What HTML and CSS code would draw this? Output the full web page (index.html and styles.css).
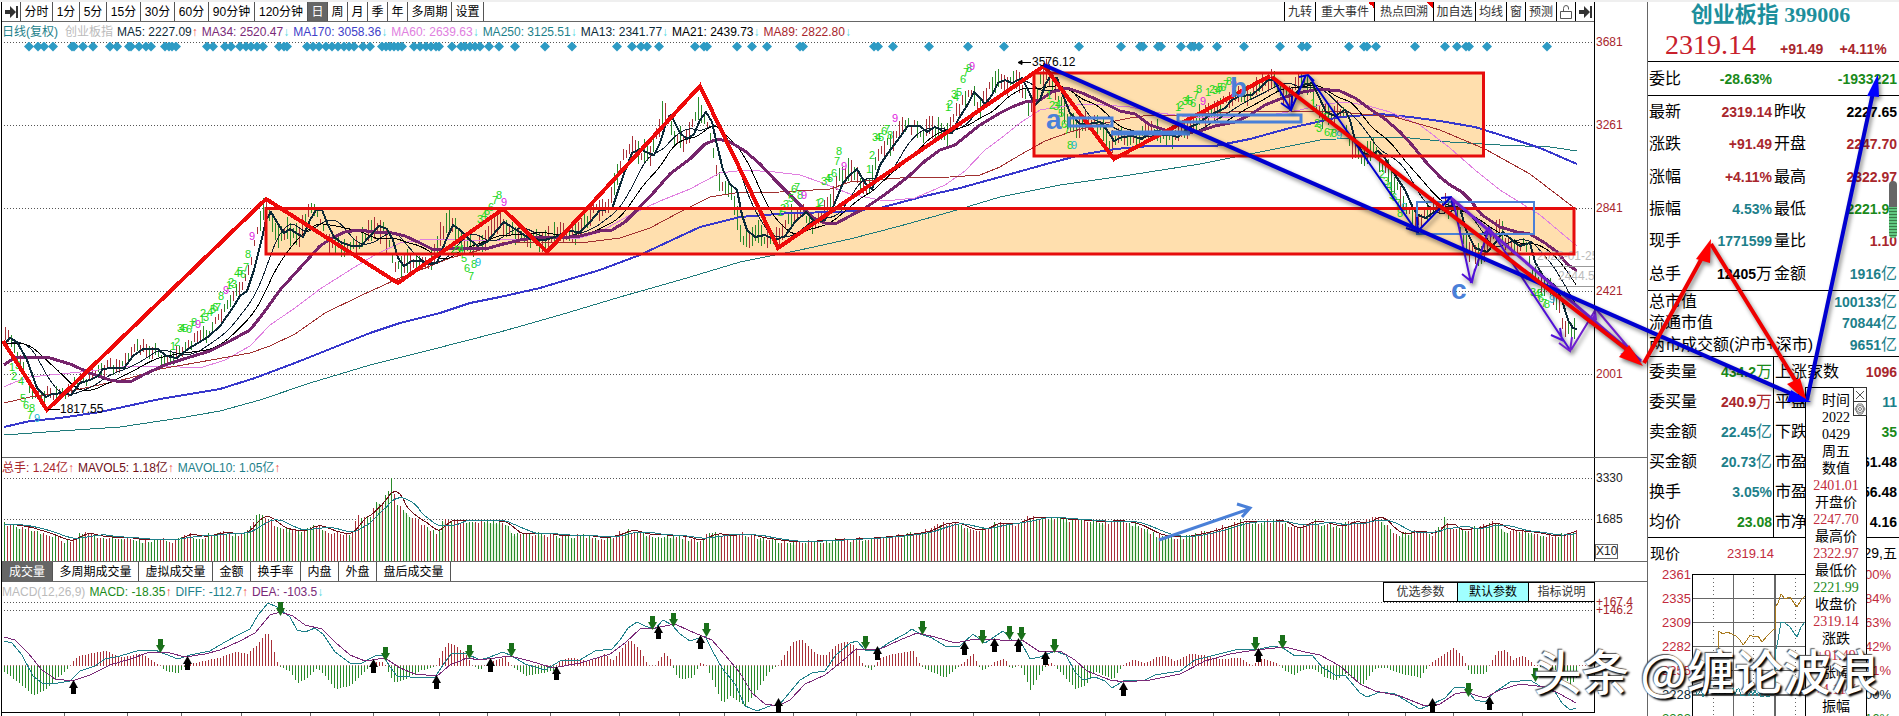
FILE: index.html
```
<!DOCTYPE html>
<html lang="zh-CN">
  <head>
    <meta charset="utf-8">
    <title>创业板指 399006</title>
    <link rel="stylesheet" href="styles.css">
  </head>
  <body>
    <div class="app">
      <main class="charts">
        <section class="panel price">
          <div class="plot">
            <nav class="toolbar">
              <div class="periods">
                <button class="icon" aria-label="收起"><svg width="13" height="12" viewBox="0 0 13 12"><path d="M0 4h5V0l6 6-6 6V8H0zM11 0h2v12h-2z" fill="#333"/></svg></button>
                <button>分时</button><button>1分</button><button>5分</button><button>15分</button><button>30分</button><button>60分</button><button>90分钟</button><button>120分钟</button><button class="active">日</button><button>周</button><button>月</button><button>季</button><button>年</button><button>多周期</button><button>设置</button>
              </div>
              <div class="tools">
                <button>九转</button><button class="flag">重大事件</button><button class="flag">热点回溯</button><button>加自选</button><button>均线</button><button>窗</button><button>预测</button>
                <button class="icon" aria-label="锁定"><svg width="12" height="14" viewBox="0 0 12 14" fill="none" stroke="#555"><path d="M.5 6.500h11v7H.5zM3.500 6V3.500Q3.500 .5 6 .5T8.500 3v1.500"/></svg></button>
                <button class="icon" aria-label="展开"><svg width="13" height="12" viewBox="0 0 13 12"><path d="M0 4h5V0l6 6-6 6V8H0zM11 0h2v12h-2z" fill="#333"/></svg></button>
              </div>
            </nav>
            <div class="legend">
              <span class="teal">日线(复权)</span><span class="mute wide">创业板指</span>
              <span class="ink">MA5: 2227.09<i class="up">↑</i></span><span class="purple">MA34: 2520.47<i class="down">↓</i></span><span class="blue">MA170: 3058.36<i class="down">↓</i></span><span class="pink">MA60: 2639.63<i class="down">↓</i></span><span class="teal">MA250: 3125.51<i class="down">↓</i></span><span class="ink">MA13: 2341.77<i class="down">↓</i></span><span>MA21: 2439.73<i class="down">↓</i></span><span class="red">MA89: 2822.80<i class="down">↓</i></span>
            </div>
            <svg id="price" class="price-svg" viewBox="2 42 1592 415" preserveAspectRatio="none"></svg>
          </div>
          <div class="axis price-axis"><span>3681</span><span>3261</span><span>2841</span><span>2421</span><span>2001</span></div>
        </section>

        <section class="panel volume">
          <div class="plot">
            <div class="legend">
              <span class="red">总手: 1.24亿<i class="up">↑</i></span><span class="maroon">MAVOL5: 1.18亿<i class="up">↑</i></span><span class="teal">MAVOL10: 1.05亿<i class="up">↑</i></span>
            </div>
            <svg id="volume" class="volume-svg" viewBox="2 478 1592 83" preserveAspectRatio="none"></svg>
          </div>
          <div class="axis volume-axis"><span>3330</span><span>1685</span><span class="unit">X10</span></div>
        </section>

        <nav class="subtabs">
          <button class="active">成交量</button><button>多周期成交量</button><button>虚拟成交量</button><button>金额</button><button>换手率</button><button>内盘</button><button>外盘</button><button>盘后成交量</button>
        </nav>

        <section class="panel macd">
          <div class="plot">
            <div class="legend">
              <span class="mute">MACD(12,26,9)</span><span class="green">MACD: -18.35<i class="up">↑</i></span><span class="teal">DIFF: -112.7<i class="up">↑</i></span><span class="purple">DEA: -103.5<i class="down">↓</i></span>
              <div class="params"><button>优选参数</button><button class="on">默认参数</button><button>指标说明</button></div>
            </div>
            <svg id="macd" class="macd-svg" viewBox="2 602 1592 110" preserveAspectRatio="none"></svg>
          </div>
          <div class="axis macd-axis"><span>+167.4</span><span>+146.2</span></div>
        </section>
        <svg id="ticks" class="ticks" viewBox="2 713 1645 3" preserveAspectRatio="none"></svg>
      </main>

      <aside class="quote">
        <h1>创业板指 399006</h1>
        <div class="last"><strong>2319.14</strong><b>+91.49</b><b>+4.11%</b></div>
        <table class="ratio">
          <tr><th>委比</th><td class="green">-28.63%</td><th></th><td class="green">-1933221</td></tr>
        </table>
        <table class="detail">
          <tr><th>最新</th><td class="red">2319.14</td><th>昨收</th><td>2227.65</td></tr>
          <tr><th>涨跌</th><td class="red">+91.49</td><th>开盘</th><td class="red">2247.70</td></tr>
          <tr><th>涨幅</th><td class="red">+4.11%</td><th>最高</th><td class="red">2322.97</td></tr>
          <tr><th>振幅</th><td class="teal">4.53%</td><th>最低</th><td class="green">2221.99</td></tr>
          <tr><th>现手</th><td class="teal">1771599</td><th>量比</th><td class="red">1.10</td></tr>
          <tr><th>总手</th><td>12405<i>万</i></td><th>金额</th><td class="teal">1916<i>亿</i></td></tr>
        </table>
        <table class="totals">
          <tr><th>总市值</th><td class="teal">100133<i>亿</i></td></tr>
          <tr><th>流通市值</th><td class="teal">70844<i>亿</i></td></tr>
          <tr><th>两市成交额(沪市+深市)</th><td class="teal">9651<i>亿</i></td></tr>
        </table>
        <table class="market">
          <tr><th>委卖量</th><td class="green">434.2<i>万</i></td><th>上涨家数</th><td class="red">1096</td></tr>
          <tr><th>委买量</th><td class="red">240.9<i>万</i></td><th>平盘家数</th><td class="teal">11</td></tr>
          <tr><th>卖金额</th><td class="teal">22.45<i>亿</i></td><th>下跌家数</th><td class="green">35</td></tr>
          <tr><th>买金额</th><td class="teal">20.73<i>亿</i></td><th>市盈率</th><td>61.48</td></tr>
          <tr><th>换手</th><td class="teal">3.05%</td><th>市盈率</th><td>56.48</td></tr>
          <tr><th>均价</th><td class="green">23.08</td><th>市净率</th><td>4.16</td></tr>
        </table>
        <div class="now"><span>现价</span><span class="crimson">2319.14</span><span class="date">04/29,五</span></div>
        <div class="mini">
          <div class="mini-axis crimson"><span>2361</span><span>2335</span><span>2309</span><span>2282</span><span>2255</span><span class="ink">2228</span><span class="green">2202</span></div>
          <svg id="mini" class="mini-svg" viewBox="1691 574 160 142" preserveAspectRatio="none"></svg>
          <div class="mini-axis crimson"><span>6.00%</span><span>4.84%</span><span>3.63%</span><span>2.42%</span><span>1.21%</span><span class="ink">0.00%</span><span class="green">1.16%</span></div>
        </div>
      </aside>

      <div class="popup">
        <div class="popup-tools">
          <button aria-label="关闭"><svg width="10" height="10" viewBox="0 0 10 10" stroke="#555"><path d="M1 1l8 8M9 1l-8 8"/></svg></button>
          <button aria-label="设置"><svg width="12" height="12" viewBox="0 0 12 12" fill="none" stroke="#777"><path d="M4 1h4l3 5-3 5H4L1 6z"/><circle cx="6" cy="6" r="3.500"/><circle cx="6" cy="6" r="1.500"/></svg></button>
        </div>
        <p>时间</p><p>2022</p><p>0429</p><p>周五</p>
        <p>数值</p><p class="crimson">2401.01</p>
        <p>开盘价</p><p class="crimson">2247.70</p>
        <p>最高价</p><p class="crimson">2322.97</p>
        <p>最低价</p><p class="green">2221.99</p>
        <p>收盘价</p><p class="crimson">2319.14</p>
        <p>涨跌</p><p class="crimson">+91.49</p>
        <p>涨幅</p><p class="crimson">+4.11%</p>
        <p>振幅</p>
      </div>

      <div class="scroll"></div>

      <!-- hand drawn wave count on top of everything -->
      <svg class="notes" viewBox="0 0 1899 716" preserveAspectRatio="none">
        <g fill="none" stroke="#4a80d8">
          <path d="M1417 202h117v32h-117z" stroke-width="2"/>
          <path d="M1069 118h43v8h-43zM1178 115h123v7h-123z" stroke-width="3"/>
          <path d="M1111 133h79" stroke-width="5"/>
          <path d="M1159 540l90-31M1237 504l13 4-8 9" stroke-width="3"/>
        </g>
        <g class="letter">
          <text x="1046" y="129">a</text><text x="1230" y="97">b</text><text x="1451" y="299">c</text>
        </g>
        <g class="shade" fill="none" stroke-width="2">
          <g stroke="#0000d0">
            <path d="M1272 77l19 33M1281 103l10 7 1-14M1291 110l15-35M1299 77l9-2 6 6M1308 75l109 157M1406 228l12 4-1-15M1417 232l34-35M1441 198l10-1 2 9"/>
          </g>
          <g stroke="#5010d8">
            <path d="M1453 200l18 83M1462 274l10 8 3-13M1471 282l18-53M1484 234l5-6 2 9M1490 229l80 121M1551 335l11 5-2-12"/>
          </g>
          <g stroke="#7020d0" stroke-width="3">
            <path d="M1451 198l190 163"/>
            <path d="M1559 343l11 8 2-14M1571 350l25-41 43 51" stroke-width="2"/>
          </g>
          <path d="M1596 310l-7 14 8-4zM1642 362l-21-24 4 14-5 2z" fill="#7020d0"/>
        </g>
        <g class="shade" stroke-width="4">
          <path d="M1044 65l757 333" stroke="#0000d0"/>
          <path d="M1272 77l362 278" stroke="#e00"/>
          <path d="M1644 363l64-116M1711 244l89 144" stroke="#e00" fill="none"/>
          <path d="M1807 400l67-312" stroke="#0000d0"/>
          <path d="M1643 366l-24-9 10-12z" fill="#f00"/>
          <path d="M1711 239l-15 20 14 4zM1807 402l-20-18 13-6z" fill="#f00"/>
          <path d="M1878 74l-11 22 12 1zM1811 402l-24 0 4-12z" fill="#00f"/>
        </g>
      </svg>
      <div class="watermark">头条 @缠论波浪</div>
    </div>
    <script src="chart.js"></script>
  </body>
</html>
```

FILE: styles.css
```
* {
  box-sizing: border-box;
}

body {
  margin: 0;
  border-top: 2px solid #efefef;
  background: #fff;
  color: #000;
  font-family: "Liberation Sans", "Noto Sans CJK SC", sans-serif;
  font-size: 12px;
}

.app {
  position: relative;
  display: flex;
  overflow: hidden;
}

button {
  margin: 0;
  padding: 0;
  border: 0;
  background: none;
  color: inherit;
  font: inherit;
  line-height: 16px;
  white-space: nowrap;
}

svg {
  display: block;
}

i {
  font-style: normal;
  font-weight: normal;
}

/* colours */
.red { color: #a8262c; }
.crimson { color: #c22b3c; }
.maroon { color: #701018; }
.green { color: #1a8a1a; }
.teal { color: #1d7f8a; }
.blue { color: #4040c8; }
.purple { color: #7a2a78; }
.pink { color: #e080e0; }
.mute { color: #bbb; }
.ink { color: #0c2a38; }
.up { color: #f05040; }
.down { color: #50d8e0; }

/* chart column */
.charts {
  flex: 1;
  min-width: 0;
  margin-left: 1px;
  border-left: 1px solid #000;
}

.panel {
  display: grid;
  grid-template-columns: 1fr 53px;
  border-bottom: 1px solid #666;
}

.plot {
  min-width: 0;
}

.plot > svg {
  width: 100%;
}

.price-svg { height: 415px; }
.volume-svg { height: 83px; }
.macd-svg { height: 110px; }

.toolbar {
  display: flex;
  justify-content: space-between;
  height: 20px;
  border-bottom: 1px solid #666;
}

.periods {
  display: grid;
  grid-template-columns: 19px 32px repeat(2, 27px) repeat(3, 34px) 46px 53px repeat(5, 20px) 44px 32px;
}

.periods button {
  border-right: 1px solid #555;
}

.tools {
  display: grid;
  grid-template-columns: 31px 59px 59px 42px 31px 19px 31px 19px 19px;
  color: #333;
}

.tools button {
  border-left: 1px solid #000;
}

.icon {
  display: flex;
  align-items: center;
  justify-content: center;
}

.toolbar .active,
.subtabs .active {
  background: #666;
  color: #fff;
}

.flag {
  background: linear-gradient(45deg, transparent 50%, #e00 50%) top right / 6px 6px no-repeat;
}

.legend {
  display: flex;
  gap: 4px;
  height: 20px;
  line-height: 20px;
  white-space: nowrap;
}

.legend i {
  display: inline-block;
  width: 6px;
  overflow: hidden;
  font-family: "Liberation Sans", sans-serif;
  vertical-align: top;
}

.wide {
  margin-left: 3px;
}

.axis {
  display: flex;
  flex-direction: column;
  padding-left: 1px;
  border-left: 1px solid #000;
  color: #a8262c;
  line-height: 16px;
}

.price-axis {
  gap: 67px;
  padding-top: 32px;
}

.volume-axis {
  gap: 25px;
  padding-top: 12px;
  color: #222;
}

.unit {
  width: 23px;
  margin-top: -8px;
  margin-left: -1px;
  border: 1px solid #666;
  line-height: 13px;
}

.macd-axis {
  padding-top: 16px;
  line-height: 8px;
}

.subtabs {
  display: grid;
  grid-template-columns: 51px 86px 74px 38px 50px 38px 38px 74px;
  height: 20px;
  border-bottom: 1px solid #666;
}

.subtabs button {
  border-right: 1px solid #555;
}

.macd {
  border-bottom: 0;
}

.macd .plot {
  border-bottom: 1px solid #000;
}

.params {
  display: grid;
  grid-template-columns: 73px 72px 65px;
  margin-left: auto;
  border: solid #000;
  border-width: 1px 0 1px 1px;
  color: #333;
}

.params .on {
  border: solid #000;
  border-width: 0 1px;
  background: #a0ffff;
  color: #000;
}

.ticks {
  width: 100%;
  height: 3px;
}

/* quote column */
.quote {
  width: 252px;
  border-left: 1px solid #666;
}

h1 {
  margin: 0;
  height: 26px;
  padding-right: 6px;
  color: #1d8f9c;
  font-family: "Liberation Serif", "Noto Sans CJK SC", serif;
  font-size: 22px;
  line-height: 26px;
  text-align: center;
  white-space: nowrap;
}

.last {
  display: flex;
  align-items: baseline;
  height: 33px;
  padding-left: 17px;
  color: #a8262c;
  line-height: 33px;
}

.last strong {
  width: 118px;
  color: #c8202c;
  font-family: "Liberation Serif", serif;
  font-size: 28px;
  font-weight: normal;
}

.last b {
  width: 61px;
  font-size: 14px;
}

table {
  width: 100%;
  table-layout: fixed;
  border-collapse: separate;
  border-spacing: 0;
  border-top: 1px solid #000;
}

th,
td {
  padding: 0 1px;
  line-height: 18px;
  white-space: nowrap;
}

th {
  width: 50px;
  font-size: 16px;
  font-weight: normal;
  text-align: left;
}

td {
  width: 75px;
  font-size: 14px;
  font-weight: bold;
  text-align: right;
}

td + th {
  width: 50px;
}

td:last-child {
  width: auto;
  padding-right: 2px;
}

td i {
  font-size: 16px;
}

.ratio { height: 34px; }
.detail { height: 195px; }
.totals { height: 66px; }
.market {
  height: 181px;
}

.totals th {
  width: 170px;
}

.market td + th {
  border-left: 1px solid #000;
}

.now {
  display: grid;
  grid-template-columns: 60px 64px 1fr;
  height: 37px;
  padding: 0 2px;
  border-top: 1px solid #000;
  font-size: 13px;
  line-height: 31px;
  text-align: right;
}

.now span:first-child {
  font-size: 15px;
  text-align: left;
}

.date {
  font-size: 14px;
}

.mini {
  display: grid;
  grid-template-columns: 43px 160px 40px;
  height: 142px;
}

.mini-axis {
  display: flex;
  flex-direction: column;
  height: 153px;
  margin-top: -11px;
  overflow: hidden;
  font-size: 13px;
  line-height: 24px;
  text-align: right;
}

.mini-svg {
  width: 100%;
  height: 142px;
}

/* floating data window */
.popup {
  position: absolute;
  top: 385px;
  right: 32px;
  width: 62px;
  height: 340px;
  padding-top: 4px;
  border: 1px solid #000;
  background: #fff;
  font-family: "Liberation Serif", "Noto Sans CJK SC", serif;
  font-size: 14px;
  line-height: 17px;
  text-align: center;
}

.popup p {
  margin: 0;
}

.popup-tools {
  position: absolute;
  top: -1px;
  right: -1px;
}

.popup-tools button {
  display: flex;
  align-items: center;
  justify-content: center;
  width: 14px;
  height: 15px;
  margin-bottom: -1px;
  border: 1px solid #333;
}

.scroll {
  position: absolute;
  top: 179px;
  right: 2px;
  width: 8px;
  height: 57px;
  border-radius: 4px;
  background: linear-gradient(#666 26px, transparent 26px), repeating-linear-gradient(#3a7a48 0 1px, #60c880 1px 3px);
}

.notes {
  position: absolute;
  top: -2px;
  left: 0;
  width: 100%;
  height: 716px;
  pointer-events: none;
}

.shade {
  filter: drop-shadow(2px 3px 2px rgba(0, 0, 0, 0.45));
}

.shade path[fill^="#"] {
  stroke: none;
}

.letter {
  fill: #4a80d8;
  font-size: 28px;
  font-weight: bold;
}

.watermark {
  position: absolute;
  top: 632px;
  right: 20px;
  color: #fff;
  font-family: "Noto Sans CJK SC", sans-serif;
  font-size: 48px;
  font-weight: 500;
  line-height: 70px;
  text-shadow: 2px 2px 2px #000, -1px -1px 1px #555;
  white-space: nowrap;
}

/* svg pieces */
.crisp {
  shape-rendering: crispEdges;
}

.count {
  font-size: 11px;
  text-anchor: middle;
}

.tag {
  font-size: 12px;
}
```

FILE: chart.js
```
const RED = "#a83038";
const GREEN = "#2a8a2a";

// every list below is "x,y x,y ..." in screen units
const ma5 = "4,344 10,338 17,342 27,360 37,388 46,397 52,394 64,393 71,395 80,383 90,380 98,376 103,369 112,368 124,368 133,356 143,349 158,349 166,356 177,358 188,349 198,343 208,337 220,326 232,309 240,296 247,291 254,270 262,238 266,220 271,212 278,224 284,233 290,229 296,233 303,237 310,220 316,210 322,210 328,225 334,237 342,243 352,246 361,246 370,236 379,226 387,229 393,240 398,258 404,266 412,261 420,261 430,264 437,263 446,240 453,225 460,230 470,240 478,246 487,242 497,230 504,222 510,226 520,232 530,239 545,240 555,237 567,231 580,232 590,222 600,210 612,209 620,185 626,168 632,153 640,149 648,153 654,155 660,143 667,120 671,115 680,133 687,139 694,134 700,120 706,112 712,122 717,145 723,170 730,184 737,190 742,215 747,230 755,237 765,235 775,240 785,236 795,222 806,212 815,222 825,220 834,205 843,183 850,175 857,169 862,178 868,187 872,189 880,165 888,153 894,145 900,137 908,126 920,126 927,132 935,127 945,132 952,133 958,120 968,104 974,92 980,98 985,104 992,95 998,83 1005,80 1012,83 1022,78 1028,90 1035,105 1040,100 1045,85 1050,77 1057,78 1063,95 1070,113 1080,124 1088,124 1100,122 1107,130 1114,141 1122,137 1132,136 1142,139 1150,132 1158,131 1166,134 1178,137 1188,128 1197,124 1210,115 1225,108 1232,100 1240,96 1252,95 1260,88 1268,80 1277,80 1284,85 1294,95 1303,85 1312,83 1319,97 1326,112 1335,116 1345,110 1350,120 1355,140 1362,152 1370,156 1378,151 1385,158 1395,175 1405,190 1413,208 1418,215 1426,218 1437,210 1450,206 1460,208 1466,230 1475,248 1487,252 1495,243 1503,232 1514,242 1520,246 1530,243 1535,262 1543,276 1555,286 1562,300 1568,320 1573,328 1577,329";
const ma34 = "4,365 14,358 22,357 50,358 70,364 90,373 110,380 122,382 132,381 145,374 165,365 190,357 210,351 230,341 250,330 262,315 280,290 300,268 320,246 332,238 345,232 358,230 375,232 392,233 405,236 420,243 432,249 440,250 455,248 485,249 500,245 520,240 540,237 560,238 580,236 600,231 612,230 625,222 640,207 655,191 670,174 690,159 705,144 718,139 730,142 745,151 760,164 775,180 790,195 805,210 815,219 825,223 837,223 850,216 865,208 880,198 895,187 910,175 925,161 940,150 955,145 965,137 980,125 1000,113 1012,107 1025,102 1040,100 1052,92 1067,88 1082,93 1100,101 1120,111 1135,114 1150,125 1165,130 1180,134 1200,131 1215,126 1235,122 1250,115 1265,105 1285,97 1303,92 1320,89 1340,91 1355,98 1370,109 1385,119 1400,132 1412,145 1425,161 1440,177 1450,185 1462,192 1470,200 1482,215 1500,227 1517,232 1530,234 1545,243 1557,252 1567,264 1577,271";
const ma60 = "4,387 15,382 30,377 60,374 90,371 130,366 160,366 200,368 225,360 250,346 270,325 295,308 320,289 350,270 375,255 400,243 420,240 440,239 470,241 500,240 540,238 580,238 600,232 630,215 660,201 690,189 720,173 745,170 775,172 800,175 820,182 850,194 885,201 915,198 945,185 965,171 985,150 1000,139 1020,123 1040,110 1065,106 1090,104 1130,107 1160,113 1190,117 1230,117 1270,115 1300,110 1325,104 1345,102 1365,105 1390,112 1420,125 1450,148 1475,170 1500,190 1540,215 1577,246";
const ma89 = "4,403 30,397 60,393 90,387 130,378 160,369 200,362 250,353 270,346 295,334 325,313 360,296 395,280 420,270 450,258 480,250 505,242 540,242 580,243 620,238 650,228 680,212 710,197 735,193 780,192 830,189 850,182 900,178 950,177 980,175 1000,167 1020,155 1045,141 1070,132 1100,124 1130,118 1150,115 1180,115 1230,112 1290,111 1340,112 1395,117 1440,130 1485,149 1530,174 1577,210";
const ma170 = "4,427 30,421 60,418 100,412 160,399 220,389 255,378 300,361 340,345 370,333 400,323 440,313 470,303 500,297 540,288 600,270 640,255 672,240 700,227 740,217 790,213 840,212 880,208 925,196 960,188 1000,177 1050,163 1085,154 1115,149 1150,146 1215,146 1250,139 1290,128 1340,117 1380,114 1410,117 1440,121 1475,127 1510,138 1540,148 1577,164";
const ma250 = "4,435 60,431 120,427 180,418 220,411 260,400 310,383 370,365 430,350 500,332 560,315 620,297 680,280 740,262 800,250 850,239 900,226 950,212 1000,197 1060,185 1130,175 1200,164 1260,152 1320,140 1370,137 1410,138 1450,142 1500,145 1550,147 1577,151";
const zigzag = "3,341 47,410 266,199 398,283 503,209 547,252 700,86 778,248 1044,66 1114,159 1270,76";
const volume = "4,524 25,527 50,535 64,541 72,540 80,532 100,537 120,537 140,540 165,539 175,541 182,533 200,537 220,532 240,535 250,525 258,514 268,518 278,528 290,530 300,532 312,524 325,529 335,533 350,534 358,516 370,515 375,500 383,502 388,488 391,478 394,495 398,505 404,510 412,518 425,524 430,532 438,532 443,516 450,522 460,520 480,520 505,522 511,533 520,534 540,533 560,536 580,535 600,538 615,535 628,529 640,534 680,536 697,541 710,533 730,536 740,533 760,538 790,542 830,540 870,538 910,534 930,530 937,524 955,522 965,529 980,530 995,522 1012,525 1023,518 1050,517 1060,519 1080,520 1100,522 1115,520 1135,524 1150,532 1160,536 1180,537 1205,532 1225,526 1240,521 1260,522 1280,520 1293,530 1310,520 1340,527 1350,520 1360,524 1378,515 1390,530 1400,535 1415,530 1430,535 1438,527 1442,525 1445,512 1448,528 1460,530 1480,527 1490,521 1505,530 1530,532 1555,537 1570,531 1576,530";
const diff = "4,641 12,643 22,655 33,676 42,683 52,684 70,681 80,671 95,666 105,659 120,656 140,650 155,650 165,654 178,659 190,655 210,651 225,642 240,634 250,629 258,615 268,603 277,607 290,617 297,630 305,632 315,628 323,634 335,652 350,663 360,664 375,656 383,655 390,667 397,676 410,677 435,677 443,665 452,653 467,654 480,660 490,657 503,652 512,656 525,664 538,668 545,670 560,661 580,660 595,651 612,649 620,640 628,628 637,622 645,626 655,629 663,620 672,625 680,634 690,641 705,636 712,650 722,668 735,684 745,706 757,711 770,706 780,704 790,692 800,680 812,673 825,671 835,656 850,643 857,641 865,650 878,650 890,642 905,634 912,629 920,634 932,638 945,646 960,646 973,634 985,643 1003,631 1012,640 1020,640 1030,659 1040,657 1055,651 1066,655 1075,672 1083,680 1095,677 1105,681 1112,688 1125,680 1145,680 1155,675 1180,671 1195,660 1215,655 1235,650 1260,649 1273,646 1283,648 1295,656 1312,655 1322,667 1335,675 1345,675 1360,693 1367,697 1380,692 1395,694 1408,702 1420,709 1430,705 1445,698 1455,687 1465,688 1475,700 1485,702 1495,692 1510,682 1530,680 1545,689 1555,692 1562,703 1570,710 1576,708";
const dea = "4,637 15,640 28,653 42,670 55,679 72,681 90,675 110,665 130,659 150,652 170,653 185,657 205,654 220,650 240,641 255,633 270,615 280,612 293,616 305,625 322,629 335,642 350,655 365,661 385,658 400,668 415,674 437,676 450,665 467,658 480,660 510,656 530,661 553,668 580,663 610,654 625,643 640,629 655,628 675,624 690,631 702,636 712,640 725,655 740,673 752,693 765,704 778,706 790,700 805,684 825,675 840,663 855,650 880,649 900,640 917,633 935,637 955,643 975,639 1000,640 1022,640 1040,652 1060,651 1075,660 1087,671 1110,680 1125,682 1150,680 1180,674 1205,661 1230,654 1255,650 1285,647 1305,652 1320,655 1340,666 1360,684 1375,691 1400,696 1425,706 1440,704 1455,694 1465,692 1485,698 1500,690 1520,684 1545,687 1560,694 1576,703";
const hist = "4,-6 22,-20 33,-30 45,-24 60,-10 70,0 73,5 80,10 90,12 105,15 120,8 140,12 152,5 160,0 165,-5 177,-8 185,0 200,4 220,8 235,14 247,12 256,20 266,33 270,30 275,10 278,0 290,-6 297,-18 308,-12 317,-2 325,-10 335,-24 350,-20 367,-3 375,4 384,3 388,-6 393,-17 405,-14 420,-5 432,-2 436,0 442,15 448,23 455,20 465,12 472,0 480,-4 490,4 505,9 510,0 526,-10 540,-8 553,-5 558,4 570,8 590,4 597,8 605,12 612,4 620,15 629,26 640,16 648,0 655,0 664,13 670,7 675,-8 681,-14 693,-12 700,3 706,0 712,-14 722,-38 730,-30 745,-40 757,-24 770,-5 778,0 785,12 793,24 802,26 815,12 825,10 835,20 845,24 855,20 863,0 872,-5 880,8 895,12 913,15 920,0 930,-6 945,-12 957,-2 963,3 973,12 978,0 983,-5 995,4 1005,7 1010,-3 1020,0 1030,-24 1042,-5 1050,4 1056,-2 1065,-12 1075,-23 1085,-20 1095,-6 1113,-14 1122,0 1133,6 1145,2 1155,8 1165,10 1175,4 1190,12 1205,10 1220,6 1240,8 1252,0 1262,7 1275,3 1285,-5 1293,-10 1305,-3 1315,-4 1325,-12 1335,-15 1345,-8 1362,-20 1375,-3 1385,-2 1400,-8 1420,-12 1430,2 1442,10 1454,18 1462,10 1470,-9 1485,-8 1490,2 1497,14 1505,16 1513,6 1523,10 1535,0 1545,-2 1560,-6 1570,-20 1576,-12";
const sells = "160,639 280,602 385,647 469,645 511,643 652,616 673,613 706,623 865,636 922,621 982,630 1009,626 1021,627 1054,639 1255,637 1282,635 1468,683 1535,668";
const buys = "73,680 187,656 373,659 436,675 490,658 556,666 658,625 700,635 778,698 877,646 964,641 994,638 1018,638 1045,651 1123,682 1258,648 1432,698 1489,696";

// nine-count marks: digit,x,y
const counts = "1,12,367 3,18,365 2,14,376 4,21,381 5,23,398 6,26,405 8,32,408 7,30,415 c,37,418 1,173,346 2,177,342 3,180,328 4,182,328 5,185,328 6,189,329 7,192,325 8,194,322 9,198,324 1,202,319 2,203,313 3,206,317 4,210,312 5,213,309 6,215,307 7,218,307 8,221,296 9,226,290 1,229,285 2,231,282 3,234,284 4,237,273 5,240,271 6,243,274 7,246,267 8,248,254 9,252,236 2,454,249 3,458,250 4,461,249 5,464,258 6,467,268 7,471,276 8,474,264 c,478,262 3,480,219 4,484,215 5,487,211 6,491,207 7,495,200 8,499,195 9,504,202 1,780,212 2,783,208 3,786,204 5,791,198 6,794,189 7,797,187 8,800,195 9,804,195 1,818,203 2,821,202 3,824,181 4,828,178 5,830,178 6,834,173 7,837,161 8,839,151 9,844,166 1,869,169 2,872,155 3,875,137 4,878,137 5,881,137 6,884,131 7,887,129 8,890,135 9,895,118 1,948,107 2,950,104 3,954,94 4,956,97 5,959,92 6,963,79 7,966,72 8,969,68 9,972,66 1,1049,95 2,1052,105 3,1056,106 4,1058,104 5,1061,113 6,1064,124 7,1067,130 8,1070,145 c,1074,145 1,1178,107 2,1181,105 3,1185,101 4,1187,99 5,1190,101 6,1193,103 7,1196,95 8,1199,89 9,1203,101 1,1208,92 2,1212,89 3,1215,90 4,1218,90 5,1220,87 6,1223,87 7,1226,84 8,1229,81 9,1234,84 1,1313,103 2,1317,123 3,1319,128 5,1326,117 6,1327,132 7,1331,133 8,1334,133 c,1339,135 2,1382,174 3,1386,181 4,1389,186 5,1392,195 6,1394,197 7,1398,203 8,1400,213 c,1404,207 2,1529,276 3,1533,292 4,1537,294 5,1540,293 6,1541,298 7,1544,303 8,1547,304 c,1552,299";

const events = [29, 38, 44, 53, 72, 74, 83, 93, 110, 117, 129, 131, 139, 146, 151, 165, 169, 172, 176, 207, 213, 225, 231, 240, 246, 251, 257, 263, 279, 284, 287, 307, 313, 319, 326, 332, 338, 344, 349, 354, 363, 370, 382, 386, 390, 394, 398, 402, 414, 420, 426, 431, 436, 439, 452, 461, 465, 470, 475, 480, 489, 499, 515, 545, 572, 617, 632, 641, 647, 659, 695, 704, 707, 737, 752, 767, 800, 803, 874, 878, 893, 929, 968, 1004, 1079, 1121, 1140, 1143, 1158, 1161, 1181, 1191, 1194, 1199, 1217, 1244, 1280, 1302, 1307, 1349, 1364, 1367, 1376, 1415, 1445, 1457, 1466, 1469, 1487, 1547];

function parse(text) {
  return text.split(" ").map((p) => p.split(",").map(Number));
}

function at(points, x) {
  if (x <= points[0][0]) return points[0][1];
  for (let i = 1; i < points.length; i++) {
    const [x0, y0] = points[i - 1];
    const [x1, y1] = points[i];
    if (x <= x1) return y0 + ((y1 - y0) * (x - x0)) / (x1 - x0);
  }
  return points[points.length - 1][1];
}

// trailing average of n samples, 3px a day
function average(points, n) {
  const out = [];
  for (let x = 4; x <= 1577; x += 3) {
    let sum = 0;
    for (let k = 0; k < n; k++) sum += at(points, x - k * 3);
    out.push(x + "," + (sum / n).toFixed(1));
  }
  return out.join(" ");
}

let seed = 7;
function random() {
  seed = (seed * 16807) % 2147483647;
  return seed / 2147483647;
}

function line(points, color, width = 1) {
  const crisp = width < 4 ? ' class="crisp"' : "";
  return `<polyline${crisp} points="${points}" fill="none" stroke="${color}" stroke-width="${width}"/>`;
}

function dotted(y, color = "#555") {
  return `<path class="crisp" d="M4 ${y + 0.5}H1593" stroke="${color}" stroke-dasharray="1 2"/>`;
}

function bar(x, y0, y1, color) {
  return `<path class="crisp" d="M${x + 0.5} ${y0.toFixed(1)}V${y1.toFixed(1)}" stroke="${color}"/>`;
}

function drawPrice() {
  const path = parse(ma5);
  let s = [42, 125, 208, 291, 374].map((y) => dotted(y)).join("");
  s += '<path d="M266 209H1574V254H266zM1034 73H1483V156H1034z" fill="#ffdfae"/>';
  for (const x of events) s += `<path d="M${x - 5} 46.5l5-5 5 5-5 5z" fill="#2e9bc4"/>`;
  for (let x = 5; x < 1577; x += 3) {
    const slope = at(path, x + 6) - at(path, x - 2);
    const mid = at(path, x + 4) + slope / 3 + (random() - 0.5) * 8;
    const half = 3 + random() * (x > 250 ? 9 : 4);
    const up = random() < (slope > 0 ? 0.3 : 0.65);
    s += bar(x, mid - half, mid + half, up ? RED : GREEN);
  }
  s += line(ma250, "#1f7a7a") + line(ma170, "#3838cc", 2) + line(ma60, "#e080e0") + line(ma89, "#a03030");
  s += line(average(path, 10), "#123") + line(average(path, 18), "#000");
  s += line(ma34, "#76256c", 3) + line(ma5, "#0c2a38", 2);
  for (const c of counts.split(" ")) {
    const [n, x, y] = c.split(",");
    const color = n === "9" ? "#e020e0" : n === "c" ? "#20b8d8" : "#20d820";
    s += `<text class="count" x="${x}" y="${+y + 4}" fill="${color}">${n === "c" ? 9 : n}</text>`;
  }
  s += '<path class="crisp" d="M1535 266H1594M1555 286H1594" stroke="#999"/>';
  s += '<g fill="#bbb"><text class="tag" x="1537" y="260">2022-01-25</text><text class="tag" x="1558" y="280">2444.55</text></g>';
  s += '<path d="M266 208.500H1574V254H266zM1034 73H1483.500V156H1034z" fill="none" stroke="#e60c0c" stroke-width="3"/>';
  s += line(zigzag, "#ee0a0a", 4).replace("/>", ' style="shape-rendering:crispEdges"/>');
  s += '<path d="M1018 62.500h13M1018 62.500l4-2v4zM48 409.500h12" stroke="#000"/>';
  s += '<text class="tag" x="1032" y="66">3576.12</text><text class="tag" x="60" y="413">1817.55</text>';
  document.getElementById("price").innerHTML = s;
}

function drawVolume() {
  const path = parse(volume);
  let s = dotted(478) + dotted(519);
  for (let x = 4; x < 1577; x += 3) {
    const spike = Math.abs(x - 391) < 2 ? 0 : random() * 5 - 2;
    const green = random() < 0.5;
    if (green && random() < 0.5) s += `<path d="M${x + 1} ${at(path, x) + 3}h2V561h-2z" fill="#e4f6e0"/>`;
    s += bar(x, at(path, x) + spike, 561, green ? GREEN : RED);
  }
  s += line(average(path, 5), "#701018") + line(average(path, 10), "#1f808a");
  document.getElementById("volume").innerHTML = s;
}

function drawMacd() {
  const path = parse(hist);
  let s = dotted(602) + dotted(610) + dotted(665, "#a66");
  for (let x = 4; x < 1577; x += 3) {
    const v = at(path, x);
    s += bar(x, 665.5, 665.5 - v, v > 0 ? RED : GREEN);
  }
  s += line(diff, "#1f808a") + line(dea, "#7a2a78");
  for (const [x, y] of parse(sells)) s += `<path d="M${x - 2} ${y}h5v6h2l-4.500 8-4.500-8h2z" fill="#1a701a"/>`;
  for (const [x, y] of parse(buys)) s += `<path d="M${x - 2} ${y + 14}h5v-6h2l-4.500-8-4.500 8h2z"/>`;
  document.getElementById("macd").innerHTML = s;

  const ticks = [64, 127, 181, 241, 310, 373, 439, 487, 550, 619, 679, 724, 793, 856, 910, 973, 1039, 1105, 1165, 1213, 1279, 1348, 1405, 1453, 1522];
  document.getElementById("ticks").innerHTML = ticks.map((x) => bar(x, 713, 716, "#666")).join("");
}

function drawMini() {
  let s = '<g class="crisp" fill="none" stroke="#666">';
  s += '<path d="M1692 598.500H1850M1692 622.500H1850M1692 646.500H1850M1692 670.500H1850M1733.500 574V716"/>';
  s += '<path d="M1713.500 574V716M1753.500 574V716M1795.500 574V716" stroke-dasharray="1 3"/>';
  s += '<path d="M1692 694.500H1850M1775 574V716" stroke-width="2"/>';
  s += '<path d="M1692.500 716V574.500H1850" stroke="#000"/></g>';
  let tail = "";
  for (let x = 1693; x < 1775; x += 2) tail += `${x},${(692 + random() * 9 - 4).toFixed(1)} `;
  s += line(tail + "1775,690 1775,654 1778,640 1781,622 1785,623 1790,627 1794,633 1797,637 1801,627 1805,622", "#2a8a92");
  s += line("1718,648 1719,631 1723,634 1727,632 1732,634 1736,636 1740,640 1743,645 1747,640 1750,635 1754,637 1758,636 1762,642 1767,636 1773,630 1775,629 1775,608 1778,603 1781,594 1785,599 1790,597 1794,603 1797,607 1801,600 1805,596", "#a87a20");
  document.getElementById("mini").innerHTML = s;
}

drawPrice();
drawVolume();
drawMacd();
drawMini();
```
